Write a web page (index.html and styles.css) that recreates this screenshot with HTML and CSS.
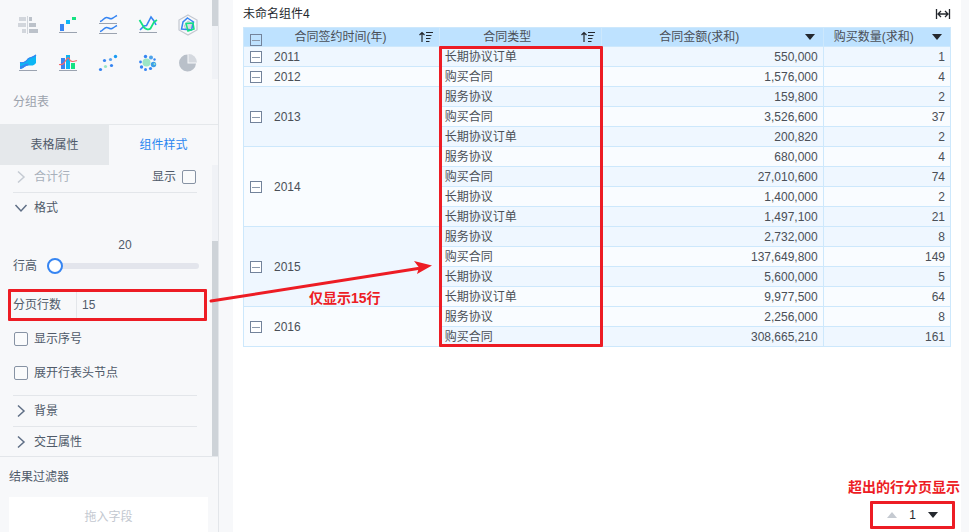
FILE: index.html
```
<!DOCTYPE html>
<html lang="zh-CN">
<head>
<meta charset="utf-8">
<title>未命名组件4</title>
<link rel="stylesheet" href="styles.css">
</head>
<body>
<div class="app">
  <aside class="sidebar">
    <section class="types">
      <div class="type-grid">
        <button class="type" aria-label="对比柱状图"><svg viewBox="0 0 24 24"><path fill="#d2d6dc" d="M3 4h7v4H3zM2 10h8v4H2zM6 16h4v4H6zM11 3h1v18h-1z"/><path fill="#bcc2ca" d="M13 4h3v4h-3zM13 10h7v4h-7zM13 16h9v4h-9z"/></svg></button>
        <button class="type" aria-label="瀑布图"><svg viewBox="0 0 24 24"><path fill="#3685f2" d="M4 11h4v7H4z"/><path fill="#0cb6f4" d="M10 7h4v4h-4z"/><path fill="#16e282" d="M16 4h4v3h-4z"/><path fill="#9ba3b0" d="M3 19h18v1H3z"/></svg></button>
        <button class="type" aria-label="范围面积图"><svg viewBox="0 0 24 24"><path fill="none" stroke="#3685f2" stroke-width="1.5" d="M4 8.500C7 8 8 4.500 10.500 4.500S14 6.500 16 5.500 19 3.500 21 2.500M4 18.500c3-.5 4-4 6.500-4s3.500 2 5.500 1 3-2 5-3"/><path fill="#9ba3b0" d="M3 10h18v1H3zM3 20h18v1H3z"/></svg></button>
        <button class="type" aria-label="折线图"><svg viewBox="0 0 24 24"><path fill="none" stroke="#3685f2" stroke-width="1.600" d="M4 17l4-4 2.500-.5L15 4l3 4 2 4"/><path fill="none" stroke="#16e282" stroke-width="1.800" d="M3.500 7L8 14.500c2 2 5 2.500 6.500 1L18 9l3-2"/><path fill="#9ba3b0" d="M3 19h18v1H3z"/></svg></button>
        <button class="type" aria-label="雷达图"><svg viewBox="0 0 24 24"><path fill="none" stroke="#c3c8d0" stroke-width="1.200" d="M12 2l9 5v10l-9 5-9-5V7z"/><path fill="#d9dde3" stroke="#c3c8d0" d="M12 8l4 2.500-1 4.500-5 1-2-3z"/><path fill="none" stroke="#3685f2" stroke-width="1.500" d="M11.500 5l6 4-2 8L5.500 16 7 9z"/><path fill="none" stroke="#16e282" stroke-width="1.500" d="M10 10.500l7-.5 1 6-6 2z"/></svg></button>
        <button class="type" aria-label="面积图"><svg viewBox="0 0 24 24"><path fill="#0cb6f4" d="M4 11c4 1 6-.5 8-3.500 2-2 5-1 8-4V12c-3 4-5 2-8 2.500-3 0-4 3-8 3.500z"/><path fill="none" stroke="#3685f2" stroke-width="1.200" d="M4 11.500c4 1 6-.5 8-3.500 2-2 5-1 8-4"/><path fill="#3685f2" d="M4 15c4 0 4-2.500 8-2.500 1 1 1 1.500 0 2-3 0-4 3-8 3.500z"/><path fill="#9ba3b0" d="M3 19h18v1H3z"/></svg></button>
        <button class="type" aria-label="组合图"><svg viewBox="0 0 24 24"><path fill="#3685f2" d="M5 7h4v11H5z"/><path fill="#0cb6f4" d="M10 4h4v14h-4z"/><path fill="#16e282" d="M15 12h4v6h-4z"/><path fill="none" stroke="#f5666a" stroke-width="1.200" d="M3 13.500c4 .5 5-1 7-4.500 2-3 3-3 4 .5 2 2 4 1 7 0"/><path fill="#9ba3b0" d="M3 19h18v1H3z"/></svg></button>
        <button class="type" aria-label="散点图"><svg viewBox="0 0 24 24"><g fill="#3685f2"><circle cx="4.500" cy="18.500" r="1.600"/><circle cx="8.500" cy="9.500" r="1.600"/><circle cx="15.500" cy="14.500" r="1.600"/></g><circle cx="14.500" cy="8.500" r="1.600" fill="#5aa4ee"/><circle cx="9.500" cy="15.500" r="1.600" fill="#9be6c6"/><circle cx="19.500" cy="5.500" r="1.700" fill="#199bf3"/></svg></button>
        <button class="type" aria-label="聚合气泡图"><svg viewBox="0 0 24 24"><circle cx="10.500" cy="11.500" r="4" fill="#9be6c6"/><g fill="#3685f2"><circle cx="9.500" cy="5.500" r="1.700"/><circle cx="4.500" cy="11" r="1.400"/><circle cx="5.500" cy="16" r="1.700"/><circle cx="9.500" cy="18.500" r="1.500"/><circle cx="14.500" cy="17.500" r="1.600"/><circle cx="18.500" cy="8.500" r="1.200"/></g><circle cx="15" cy="6.500" r="2" fill="#4ea3ea"/><circle cx="17.500" cy="13.500" r="2.700" fill="#3d9fe8"/><circle cx="18.500" cy="13" r="1" fill="#9be6c6"/></svg></button>
        <button class="type" aria-label="饼图"><svg viewBox="0 0 24 24"><path fill="#b9c0c9" d="M11.500 3.500v9h8.500a8.500 8.500 0 1 1-8.500-9z"/><path fill="#d5d9df" d="M12.500 3a8.500 8.500 0 0 1 8.500 8.500h-8.500z"/></svg></button>
      </div>
      <p class="type-name">分组表</p>
      <span class="scroll scroll-types"><i></i></span>
    </section>

    <nav class="tabs">
      <button class="tab">表格属性</button>
      <button class="tab active">组件样式</button>
    </nav>

    <section class="pane">
      <div class="group group-first">
        <svg class="chev faint" viewBox="0 0 16 16"><path d="M5 2.500L11 8l-6 5.500"/></svg>
        <span class="faint grow">合计行</span>
        <label class="check"><span>显示</span><input type="checkbox"></label>
      </div>
      <div class="group">
        <svg class="chev" viewBox="0 0 16 16"><path d="M2.500 5L8 11l5.500-6"/></svg>
        <span>格式</span>
      </div>
      <div class="format">
        <output class="value" for="rowh">20</output>
        <div class="slide">
          <label for="rowh">行高</label>
          <input id="rowh" type="range" min="20" max="100" value="20">
        </div>
        <div class="rows marked">
          <label for="pagerows">分页行数</label>
          <input id="pagerows" type="text" value="15">
        </div>
        <label class="check"><input type="checkbox"><span>显示序号</span></label>
        <label class="check"><input type="checkbox"><span>展开行表头节点</span></label>
      </div>
      <div class="group ruled">
        <svg class="chev" viewBox="0 0 16 16"><path d="M5 2.500L11 8l-6 5.500"/></svg>
        <span>背景</span>
      </div>
      <div class="group ruled">
        <svg class="chev" viewBox="0 0 16 16"><path d="M5 2.500L11 8l-6 5.500"/></svg>
        <span>交互属性</span>
      </div>
      <span class="scroll scroll-pane"><i></i></span>
    </section>

    <section class="filter">
      <h2>结果过滤器</h2>
      <div class="drop">拖入字段</div>
    </section>
  </aside>

  <main class="board">
    <header class="head">
      <h1>未命名组件4</h1>
      <button class="fit" aria-label="适应宽度"><svg viewBox="0 0 16 12"><path d="M1.500 1v10M14.500 1v10M3 6h10M6 3L3 6l3 3M10 3l3 3-3 3"/></svg></button>
    </header>

    <div class="grid">
      <table>
        <colgroup><col class="c-year"><col class="c-type"><col class="c-sum"><col class="c-qty"></colgroup>
        <thead>
          <tr>
            <th><div class="th"><span class="slot low"><button class="fold" aria-label="收起"></button></span><span class="grow">合同签约时间(年)</span><span class="slot"><svg class="sort" viewBox="0 0 14 12"><path d="M3 11V2M.5 4L3 1.500 5.500 4M7 1.500h7M7 4.500h5.500M7 7.500h4.500M7 10.500h3.500"/></svg></span></div></th>
            <th><div class="th"><span class="grow">合同类型</span><span class="slot"><svg class="sort" viewBox="0 0 14 12"><path d="M3 11V2M.5 4L3 1.500 5.500 4M7 1.500h7M7 4.500h5.500M7 7.500h4.500M7 10.500h3.500"/></svg></span></div></th>
            <th><div class="th"><span class="grow">合同金额(求和)</span><span class="slot"><i class="down"></i></span></div></th>
            <th><div class="th"><span class="grow">购买数量(求和)</span><span class="slot"><i class="down"></i></span></div></th>
          </tr>
        </thead>
        <tbody>
          <tr class="a"><td class="year"><button class="fold" aria-label="收起"></button>2011</td><td>长期协议订单</td><td class="n">550,000</td><td class="n">1</td></tr>
        </tbody>
        <tbody>
          <tr class="b"><td class="year"><button class="fold" aria-label="收起"></button>2012</td><td>购买合同</td><td class="n">1,576,000</td><td class="n">4</td></tr>
        </tbody>
        <tbody>
          <tr class="a"><td class="year" rowspan="3"><button class="fold" aria-label="收起"></button>2013</td><td>服务协议</td><td class="n">159,800</td><td class="n">2</td></tr>
          <tr class="b"><td>购买合同</td><td class="n">3,526,600</td><td class="n">37</td></tr>
          <tr class="a"><td>长期协议订单</td><td class="n">200,820</td><td class="n">2</td></tr>
        </tbody>
        <tbody>
          <tr class="b"><td class="year" rowspan="4"><button class="fold" aria-label="收起"></button>2014</td><td>服务协议</td><td class="n">680,000</td><td class="n">4</td></tr>
          <tr class="a"><td>购买合同</td><td class="n">27,010,600</td><td class="n">74</td></tr>
          <tr class="b"><td>长期协议</td><td class="n">1,400,000</td><td class="n">2</td></tr>
          <tr class="a"><td>长期协议订单</td><td class="n">1,497,100</td><td class="n">21</td></tr>
        </tbody>
        <tbody>
          <tr class="a"><td class="year" rowspan="4"><button class="fold" aria-label="收起"></button>2015</td><td>服务协议</td><td class="n">2,732,000</td><td class="n">8</td></tr>
          <tr class="b"><td>购买合同</td><td class="n">137,649,800</td><td class="n">149</td></tr>
          <tr class="a"><td>长期协议</td><td class="n">5,600,000</td><td class="n">5</td></tr>
          <tr class="b"><td>长期协议订单</td><td class="n">9,977,500</td><td class="n">64</td></tr>
        </tbody>
        <tbody>
          <tr class="b"><td class="year" rowspan="2"><button class="fold" aria-label="收起"></button>2016</td><td>服务协议</td><td class="n">2,256,000</td><td class="n">8</td></tr>
          <tr class="a"><td>购买合同</td><td class="n">308,665,210</td><td class="n">161</td></tr>
        </tbody>
      </table>
      <span class="column-mark"></span>
    </div>

    <footer class="foot">
      <p class="note">超出的行分页显示</p>
      <div class="pager marked">
        <button aria-label="上一页"><i class="up"></i></button>
        <span>1</span>
        <button aria-label="下一页"><i class="down"></i></button>
      </div>
    </footer>
  </main>

  <svg class="arrow" viewBox="0 0 224 44" aria-hidden="true"><path d="M3 40L210 7.500" fill="none" stroke="#ed1c24" stroke-width="3" stroke-linecap="round"/><path d="M206 0l18 4.500-15 8.500 2-6.500z" fill="#ed1c24"/></svg>
  <p class="note arrow-note">仅显示15行</p>
</div>
</body>
</html>
```
FILE: styles.css
```
* { box-sizing: border-box; }

body {
  margin: 0;
  background: #f7f8fa;
  color: #4f5a69;
  font: 12px/20px "Liberation Sans", "Noto Sans CJK SC", sans-serif;
}

h1, h2, p { margin: 0; font: inherit; }
button { padding: 0; border: 0; background: none; color: inherit; font: inherit; }
svg { display: block; }
.grow { flex: 1; }

.app {
  position: relative;
  display: grid;
  grid-template-columns: 219px 1fr;
  column-gap: 14px;
  height: 100vh;
  min-height: 532px;
  padding-right: 8px;
  overflow: hidden;
}

/* Sidebar */
.sidebar {
  display: flex;
  flex-direction: column;
  min-height: 0;
  border-right: 1px solid #e3e6ea;
}

.types {
  position: relative;
  padding: 6px 10px 12px 8px;
  border-bottom: 1px solid #e5e8eb;
}
.type-grid { display: grid; grid-template-columns: repeat(5, 40px); }
.type { display: grid; place-items: center; height: 38px; }
.type svg { width: 24px; height: 24px; }
.type-name { margin-top: 10px; padding-left: 5px; color: #9ba2ac; }

.scroll { position: absolute; right: 0; width: 6px; background: #f0f2f6; }
.scroll i { display: block; background: #ced3d8; }
.scroll-types { top: 0; height: 79px; }
.scroll-types i { height: 26px; }
.scroll-pane { top: 0; bottom: 0; padding-top: 76px; }
.scroll-pane i { height: 100%; }

.tabs { display: flex; }
.tab { flex: 1; height: 40px; }
.tab:first-child { background: #e5e8eb; }
.tab.active { color: #2a86f0; }

.pane { position: relative; flex: 1; min-height: 0; padding: 0 21px 0 13px; overflow: hidden; }
.group { display: flex; align-items: center; height: 30px; }
.group > span { margin-left: 5px; }
.group-first { height: 28px; padding-bottom: 3px; border-bottom: 1px solid #e3e6ea; }
.ruled { height: 31px; border-top: 1px solid #e3e6ea; }
.faint { color: #a8b0bb; }
.chev { width: 16px; height: 16px; fill: none; stroke: #5f6f86; stroke-width: 1.5; }
.chev.faint { stroke: #c5cbd3; }

.check { display: flex; align-items: center; gap: 5px; }
.check input {
  appearance: none;
  width: 14px;
  height: 14px;
  margin: 0 1px;
  border: 1px solid #8793a4;
  border-radius: 2px;
  background: #fafbfc;
}

.format { display: flex; flex-direction: column; padding: 12px 0; }
.value { align-self: center; padding-left: 40px; }
.slide { display: flex; align-items: center; gap: 10px; height: 22px; }
.slide input {
  appearance: none;
  flex: 1;
  min-width: 0;
  height: 6px;
  margin: 0 -2px 0 0;
  border-radius: 3px;
  background: #e3e5ec;
}
.slide input::-webkit-slider-thumb {
  appearance: none;
  width: 16px;
  height: 16px;
  border: 2px solid #3685f2;
  border-radius: 50%;
  background: #fff;
}

.marked { border: 3px solid #ed1c24; border-radius: 1px; }
.rows { display: flex; margin: 12px -10px 8px -5px; height: 32px; }
.rows label { display: flex; align-items: center; width: 66px; padding-left: 2px; border-right: 1px solid #e3e6ea; }
.rows input { flex: 1; min-width: 0; padding: 0 5px; border: 0; background: none; color: inherit; font: inherit; }
.format .check + .check { margin-top: 14px; }

.filter { padding: 10px 10px 0 9px; border-top: 1px solid #e3e6ea; }
.drop { margin-top: 10px; padding: 10px 0 5px; background: #fff; color: #c3c8d0; text-align: center; }

/* Board */
.board {
  display: flex;
  flex-direction: column;
  min-width: 0;
  padding: 4px 10px 3px;
  background: #fff;
}
.head { display: flex; justify-content: space-between; align-items: center; margin-bottom: 3px; color: #24282e; }
.fit svg { width: 16px; height: 12px; fill: none; stroke: #24282e; stroke-width: 1.3; }

.grid { position: relative; color: #4a4f57; }
table {
  width: 100%;
  table-layout: fixed;
  border: 1px solid #cde8fc;
  border-width: 1px 0 0 1px;
  border-spacing: 0;
}
.c-year { width: 27.7%; }
.c-type { width: 22.9%; }
.c-sum { width: 31.4%; }
th, td {
  height: 20px;
  padding: 1px 5px 0;
  border: 1px solid #cde8fc;
  border-width: 0 1px 1px 0;
  font-weight: normal;
  line-height: 18px;
  text-align: left;
}
th { height: 19px; padding: 0; background: #bee2ff; text-align: center; }
td.n { text-align: right; }
.a td { background: #eff7ff; }
.b td { background: #f9fcff; }
.th { display: flex; height: 18px; }
.slot { display: grid; place-items: center; width: 26px; }
.low { align-items: end; width: 24px; }
.fold {
  width: 12px;
  height: 12px;
  border: 1px solid #73839b;
  background: linear-gradient(#8c99ab, #8c99ab) center / 8px 1px no-repeat #fff;
}
.th .fold { background-color: transparent; }
.year .fold { margin: 0 12px 0 1px; vertical-align: -1px; }
.sort { width: 14px; height: 12px; fill: none; stroke: #24282e; stroke-width: 1.2; }
.down, .up { display: block; border: 5px solid transparent; border-width: 6px 5px 0; border-top-color: #24282e; }
.up { border-width: 0 5px 6px; border-bottom-color: #c5cad1; }

.column-mark {
  position: absolute;
  top: 19px;
  bottom: 0;
  left: 27.7%;
  width: 23.1%;
  border: 3px solid #ed1c24;
  border-radius: 1px;
}

.foot { display: flex; flex-direction: column; align-items: flex-end; margin-top: auto; }
.note { color: #ed1c24; font-size: 14px; font-weight: bold; white-space: nowrap; }
.foot .note { margin: 0 -9px 4px 0; }
.pager { display: flex; align-items: center; justify-content: center; gap: 12px; width: 85px; height: 28px; margin-right: -4px; color: #24282e; }

/* Callout between the setting and the table */
.arrow { position: absolute; top: 261px; left: 208px; width: 224px; height: 44px; }
.arrow-note { position: absolute; top: 288px; left: 309px; }
```
